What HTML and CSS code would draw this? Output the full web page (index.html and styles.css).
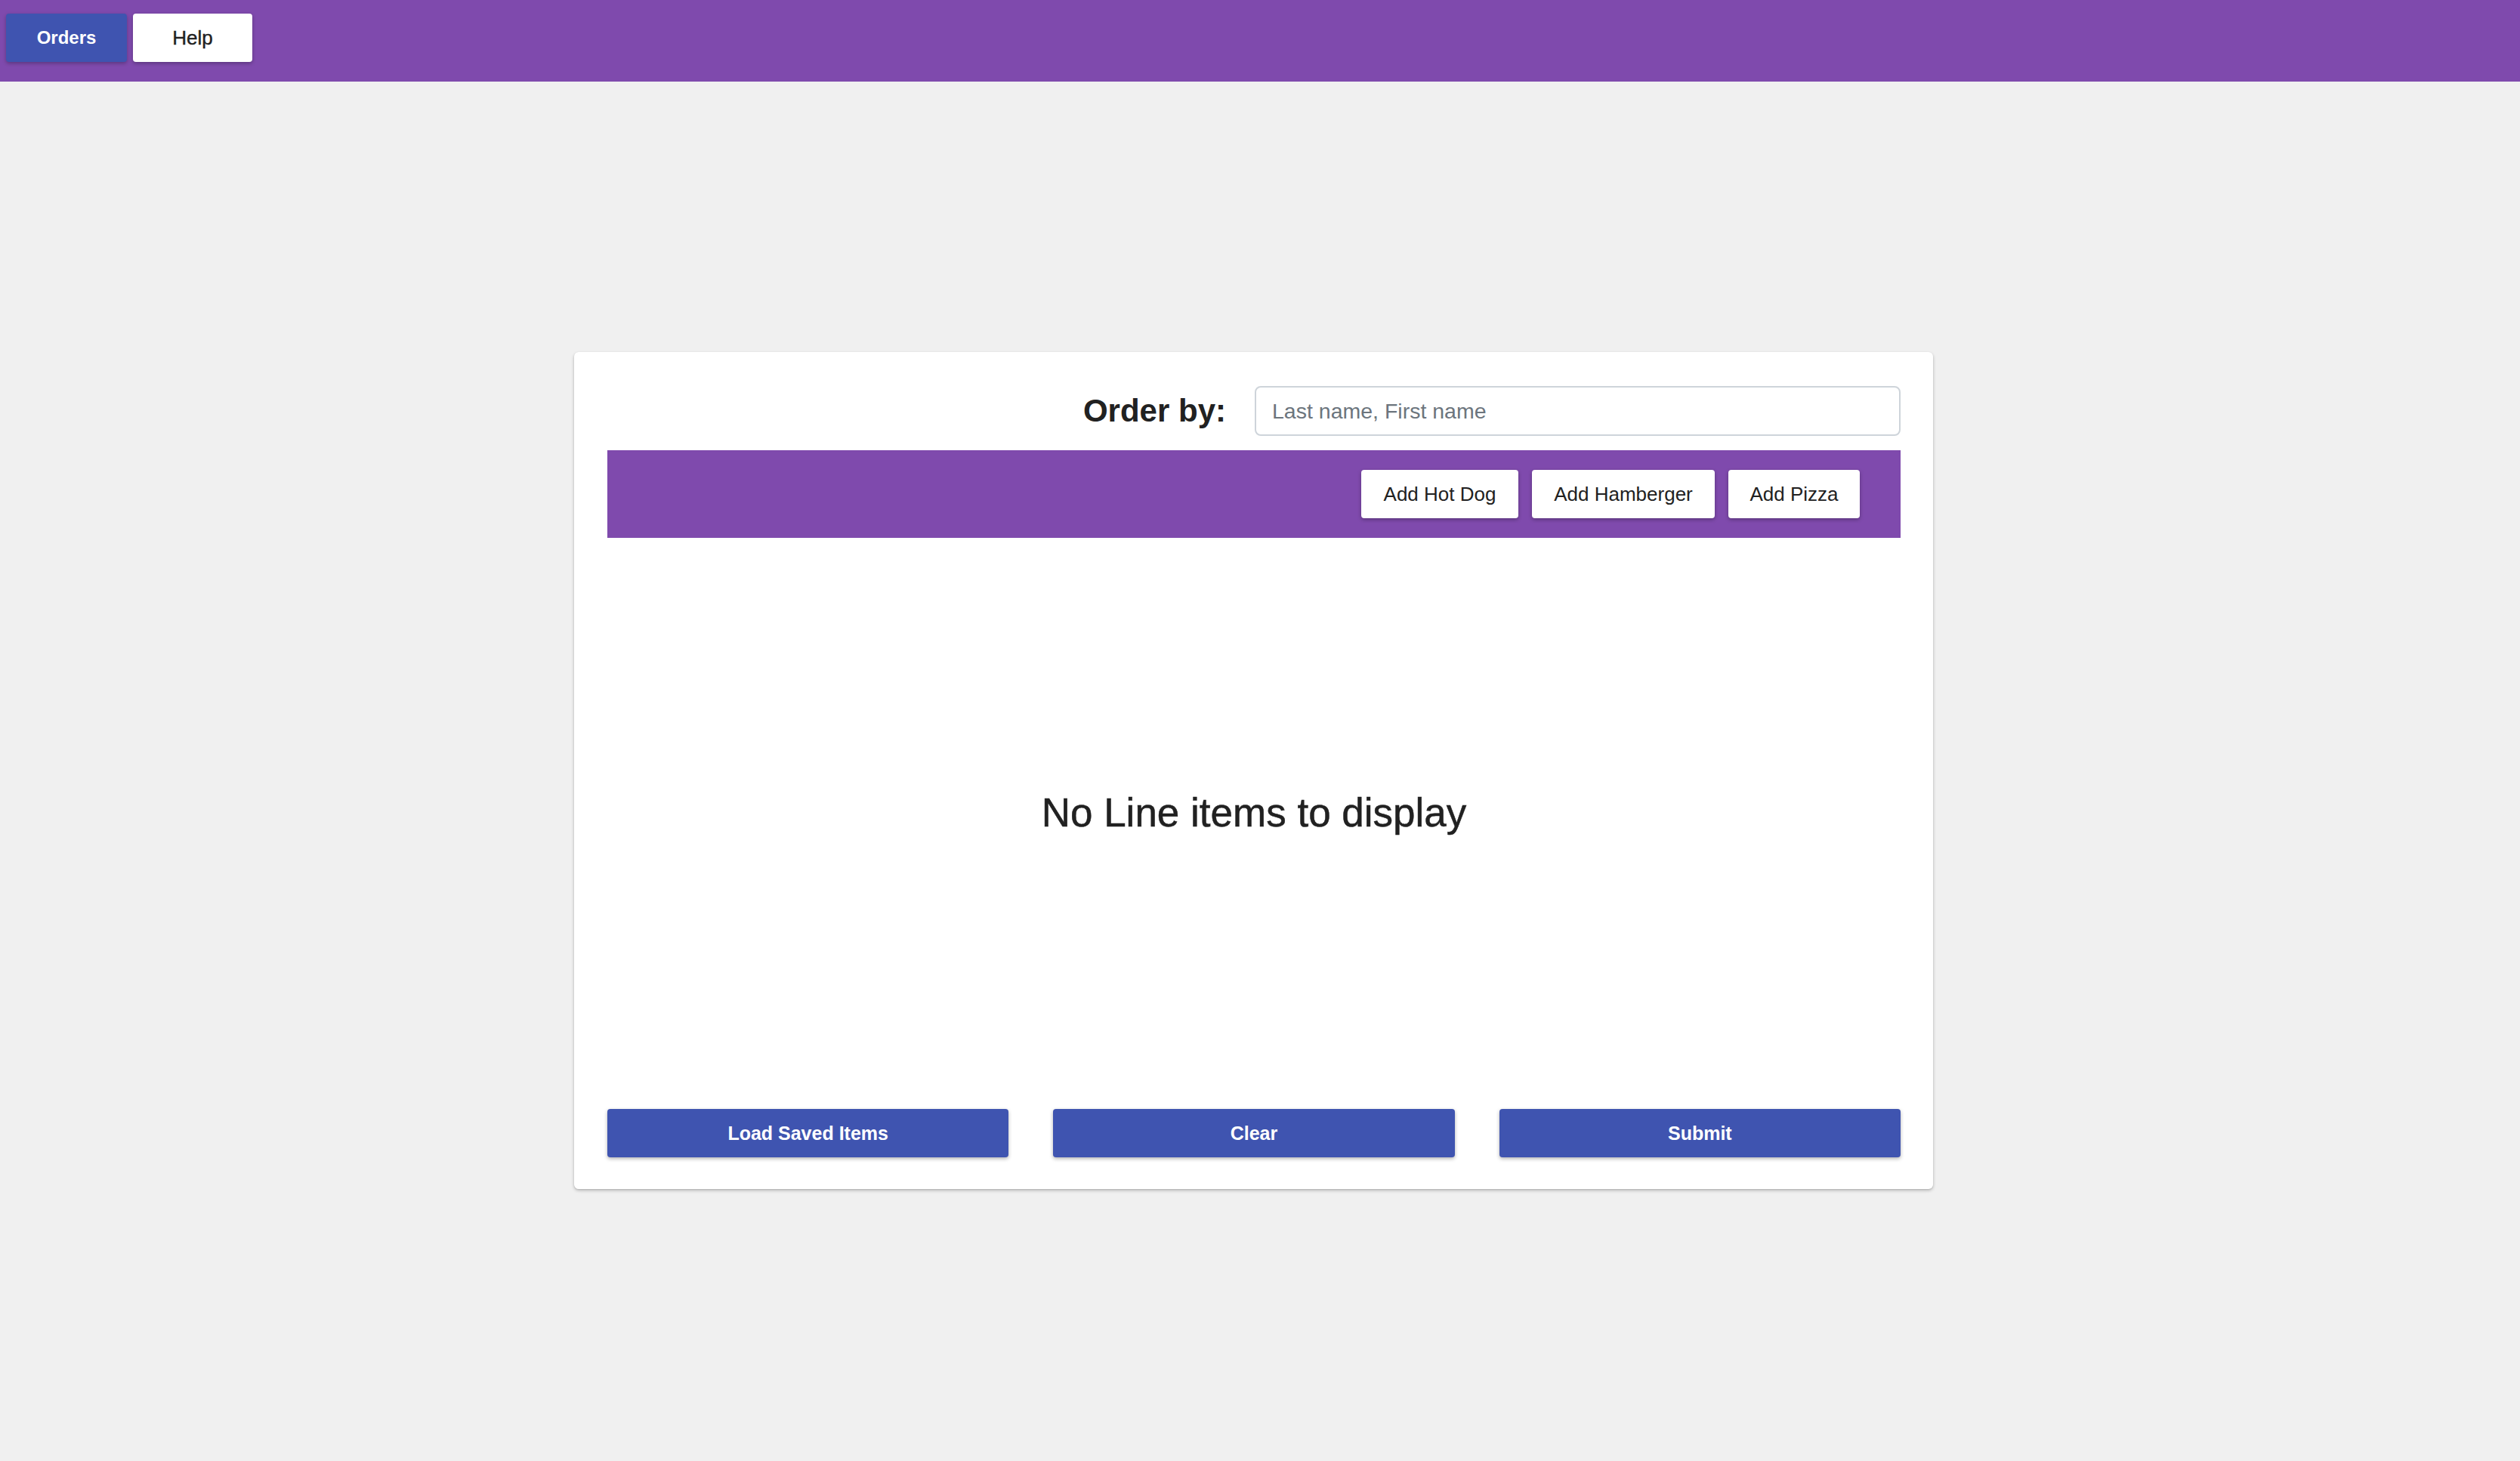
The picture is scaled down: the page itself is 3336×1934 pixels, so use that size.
FILE: index.html
```html
<!DOCTYPE html>
<html lang="en">
<head>
<meta charset="utf-8">
<title>Orders</title>
<link rel="stylesheet" href="styles.css">
</head>
<body>
<header class="topbar">
  <button class="nav-btn nav-btn--active">Orders</button>
  <button class="nav-btn nav-btn--plain">Help</button>
</header>
<main class="card">
  <div class="order-row">
    <h1 class="order-label">Order by:</h1>
    <input class="order-input" type="text" placeholder="Last name, First name">
  </div>
  <div class="toolbar">
    <button class="add-btn">Add Hot Dog</button>
    <button class="add-btn">Add Hamberger</button>
    <button class="add-btn">Add Pizza</button>
  </div>
  <div class="empty">
    <h2 class="empty-text">No Line items to display</h2>
  </div>
  <div class="actions">
    <button class="action-btn">Load Saved Items</button>
    <button class="action-btn">Clear</button>
    <button class="action-btn">Submit</button>
  </div>
</main>
</body>
</html>
```
FILE: styles.css
```css
html, body {
  margin: 0;
  padding: 0;
}
body {
  background: #f0f0f0;
  font-family: "Liberation Sans", Arial, Helvetica, sans-serif;
  color: #212121;
  min-height: 1934px;
}
button {
  font-family: inherit;
  border: 0;
  cursor: pointer;
}
.topbar {
  box-sizing: border-box;
  height: 108px;
  background: #7f4aad;
  display: flex;
  align-items: flex-start;
  gap: 8px;
  padding: 18px 8px 0;
}
.nav-btn {
  height: 64px;
  border-radius: 4px;
  font-size: 24px;
  font-weight: bold;
  box-shadow: 0 2px 5px rgba(0, 0, 0, 0.28);
}
.nav-btn--active {
  width: 160px;
  background: #3f54b0;
  color: #fff;
}
.nav-btn--plain {
  width: 158px;
  background: #fff;
  color: #212121;
  font-weight: normal;
  font-size: 26px;
  -webkit-text-stroke: 0.4px #212121;
}
.card {
  box-sizing: border-box;
  width: 1799px;
  height: 1108px;
  margin: 358px 0 0 760px;
  background: #fff;
  border-radius: 6px;
  box-shadow: 0 2px 4px rgba(0, 0, 0, 0.22), 0 1px 2px rgba(0, 0, 0, 0.1);
  padding: 45px 43px 42px 44px;
  display: flex;
  flex-direction: column;
}
.order-row {
  display: flex;
  justify-content: flex-end;
  align-items: center;
  gap: 38px;
}
.order-label {
  margin: 0;
  font-size: 42px;
  font-weight: bold;
  color: #212121;
}
.order-input {
  box-sizing: border-box;
  width: 855px;
  height: 66px;
  border: 2px solid #ced4da;
  border-radius: 8px;
  padding: 0 21px;
  font-family: inherit;
  font-size: 28.5px;
  color: #495057;
  background: #fff;
  outline: none;
}
.order-input::placeholder {
  color: #6c757d;
}
.toolbar {
  margin-top: 19px;
  height: 116px;
  background: #7f4aad;
  display: flex;
  justify-content: flex-end;
  align-items: center;
  gap: 18px;
  padding-right: 54px;
}
.add-btn {
  height: 64px;
  background: #fff;
  color: #212121;
  border-radius: 4px;
  font-size: 26px;
  padding: 0;
  box-shadow: 0 2px 5px rgba(0, 0, 0, 0.3);
}
.add-btn:nth-child(1) { width: 208px; }
.add-btn:nth-child(2) { width: 242px; }
.add-btn:nth-child(3) { width: 174px; }
.empty {
  flex: 1;
  display: flex;
  align-items: center;
  justify-content: center;
  padding-bottom: 30px;
}
.empty-text {
  margin: 0;
  font-size: 53px;
  font-weight: normal;
  color: #212121;
  -webkit-text-stroke: 0.5px #212121;
}
.actions {
  display: grid;
  grid-template-columns: repeat(3, 1fr);
  column-gap: 59px;
}
.action-btn {
  height: 64px;
  background: #3f54b0;
  color: #fff;
  border-radius: 4px;
  font-size: 25px;
  font-weight: bold;
  box-shadow: 0 2px 5px rgba(0, 0, 0, 0.3);
}
```
